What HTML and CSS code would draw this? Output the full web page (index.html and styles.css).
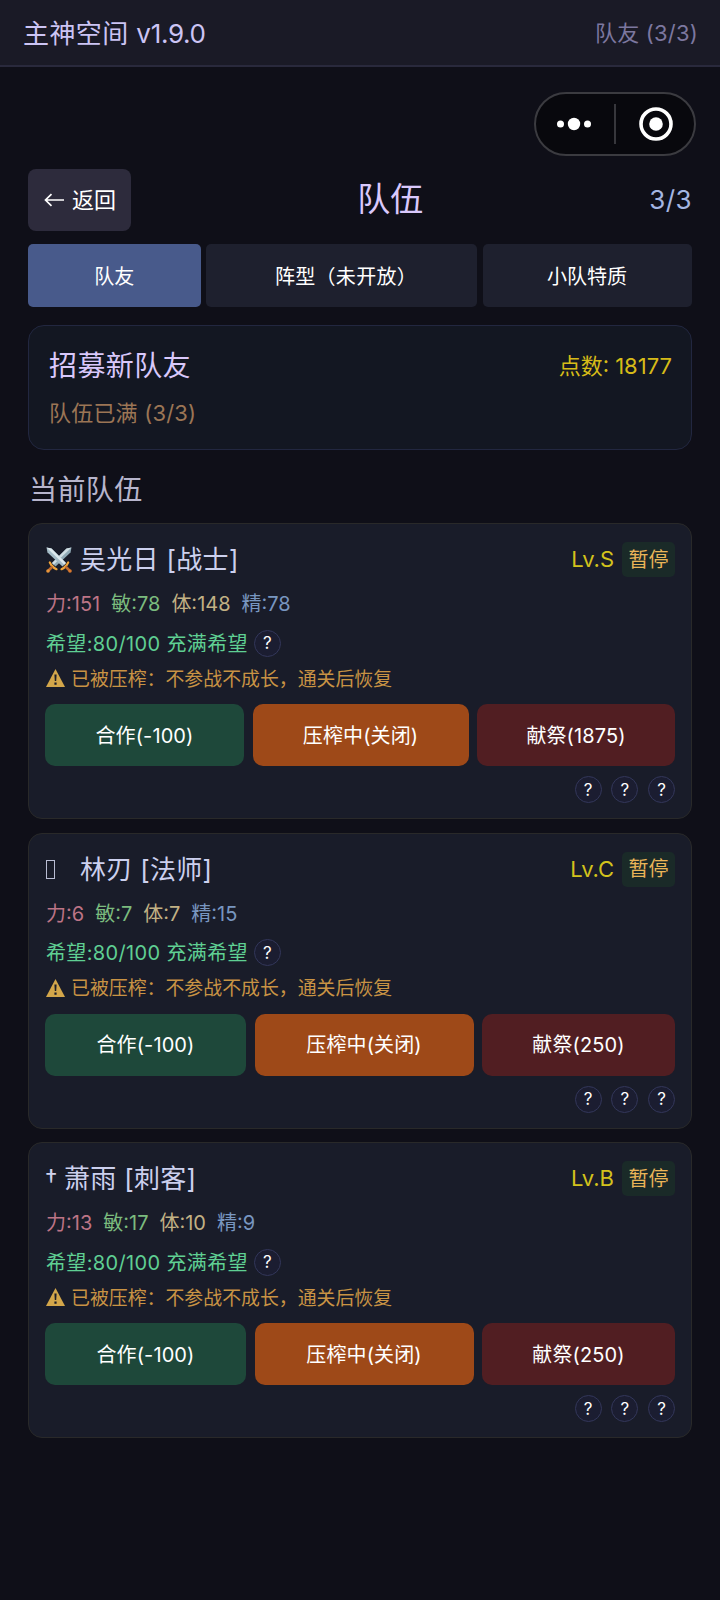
FILE: index.html
```html
<!DOCTYPE html>
<html lang="zh-CN">
<head>
<meta charset="utf-8">
<title>主神空间</title>
<link rel="stylesheet" href="styles.css">
</head>
<body>
<header class="topbar">
  <div class="app-name">主神空间 <span class="version">v1.9.0</span></div>
  <div class="crumb">队友 (3/3)</div>
</header>
<div class="capsule-row">
  <div class="capsule">
    <svg class="dots" width="34" height="14" viewBox="0 0 34 14"><g fill="#fff"><circle cx="3.5" cy="7" r="3.5"/><circle cx="17" cy="7" r="6.2"/><circle cx="30.5" cy="7" r="3.5"/></g></svg>
    <span class="divider"></span>
    <svg class="target" width="34" height="34" viewBox="0 0 34 34"><circle cx="17" cy="17" r="15" fill="none" stroke="#fff" stroke-width="3.6"/><circle cx="17" cy="17" r="6.8" fill="#fff"/></svg>
  </div>
</div>
<main class="page">
  <div class="title-row">
    <button class="back"><svg width="21" height="14" viewBox="0 0 21 14"><path d="M20 7H1.5M7.5 1.2L1.5 7l6 5.8" fill="none" stroke="#fff" stroke-width="1.7"/></svg><span class="back-text">返回</span></button>
    <h1 class="title">队伍</h1>
    <div class="count">3/3</div>
  </div>
  <nav class="tabs">
    <button class="tab active">队友</button>
    <button class="tab formation">阵型（未开放）</button>
    <button class="tab">小队特质</button>
  </nav>
  <section class="recruit">
    <div class="recruit-head"><h2 class="recruit-title">招募新队友</h2><div class="points">点数: 18177</div></div>
    <div class="full">队伍已满 (3/3)</div>
  </section>
  <h2 class="section-title">当前队伍</h2>

  <article class="card">
    <div class="card-head">
      <svg class="swords" width="26" height="26" viewBox="0 0 26 26">
        <path d="M25.500.5l-5 1L6 16l3.500 3.500L24.500 5.500z" fill="#8fa9b5"/><path d="M25.500.5L7.700 17.800 6 16 20.500 1.500z" fill="#cfdde3"/>
        <path d="M.5.500l5 1L20 16l-3.500 3.500L1.500 5.500z" fill="#a4bbc6"/><path d="M.5.500L18.300 17.800 20 16 5.500 1.500z" fill="#dce8ed"/>
        <path d="M3.800 15.500l1.500 2.500 3 3 2.200 1.200M22.200 15.500L20.700 18l-3 3-2.200 1.200" fill="none" stroke="#f2a63a" stroke-width="2.200" stroke-linecap="round"/>
        <path d="M6.500 19.500l-4 4M19.500 19.500l4 4" stroke="#bd6a30" stroke-width="2.600"/>
        <circle cx="2" cy="24" r="1.800" fill="#e9953a"/><circle cx="24" cy="24" r="1.800" fill="#d9782e"/>
      </svg>
      <h3 class="name">吴光日 [战士]</h3><span class="level">Lv.S</span><button class="pause">暂停</button>
    </div>
    <div class="stats"><span class="str">力:151</span><span class="agi">敏:78</span><span class="con">体:148</span><span class="spi">精:78</span></div>
    <div class="hope"><span class="hope-text">希望:80/100 充满希望</span><span class="help">?</span></div>
    <div class="warn"><svg width="19" height="18" viewBox="0 0 19 18"><path d="M9.500 0L19 18H0z" fill="#d3a64a"/><path d="M8.400 5.500h2.200l-.4 6.500H8.800zM8.400 13.500h2.200v2.200H8.400z" fill="#1a1c28"/></svg><span>已被压榨：不参战不成长，通关后恢复</span></div>
    <div class="actions wide"><button class="btn green">合作(-100)</button><button class="btn orange">压榨中(关闭)</button><button class="btn red">献祭(1875)</button></div>
    <div class="helps"><span class="help">?</span><span class="help">?</span><span class="help">?</span></div>
  </article>

  <article class="card">
    <div class="card-head">
      <span class="missing"></span>
      <h3 class="name">林刃 [法师]</h3><span class="level">Lv.C</span><button class="pause">暂停</button>
    </div>
    <div class="stats"><span class="str">力:6</span><span class="agi">敏:7</span><span class="con">体:7</span><span class="spi">精:15</span></div>
    <div class="hope"><span class="hope-text">希望:80/100 充满希望</span><span class="help">?</span></div>
    <div class="warn"><svg width="19" height="18" viewBox="0 0 19 18"><path d="M9.500 0L19 18H0z" fill="#d3a64a"/><path d="M8.400 5.500h2.200l-.4 6.500H8.800zM8.400 13.500h2.200v2.200H8.400z" fill="#1a1c28"/></svg><span>已被压榨：不参战不成长，通关后恢复</span></div>
    <div class="actions"><button class="btn green">合作(-100)</button><button class="btn orange">压榨中(关闭)</button><button class="btn red">献祭(250)</button></div>
    <div class="helps"><span class="help">?</span><span class="help">?</span><span class="help">?</span></div>
  </article>

  <article class="card">
    <div class="card-head">
      <span class="dagger">†</span>
      <h3 class="name">萧雨 [刺客]</h3><span class="level">Lv.B</span><button class="pause">暂停</button>
    </div>
    <div class="stats"><span class="str">力:13</span><span class="agi">敏:17</span><span class="con">体:10</span><span class="spi">精:9</span></div>
    <div class="hope"><span class="hope-text">希望:80/100 充满希望</span><span class="help">?</span></div>
    <div class="warn"><svg width="19" height="18" viewBox="0 0 19 18"><path d="M9.500 0L19 18H0z" fill="#d3a64a"/><path d="M8.400 5.500h2.200l-.4 6.500H8.800zM8.400 13.500h2.200v2.200H8.400z" fill="#1a1c28"/></svg><span>已被压榨：不参战不成长，通关后恢复</span></div>
    <div class="actions"><button class="btn green">合作(-100)</button><button class="btn orange">压榨中(关闭)</button><button class="btn red">献祭(250)</button></div>
    <div class="helps"><span class="help">?</span><span class="help">?</span><span class="help">?</span></div>
  </article>
</main>
</body>
</html>
```
FILE: styles.css
```css
* { box-sizing: border-box; margin: 0; padding: 0; }
body {
  width: 720px;
  min-height: 1600px;
  background: #0f0f18;
  color: #fff;
  font-family: Inter, "Noto Sans CJK SC", sans-serif;
  font-weight: 390;
  white-space: nowrap;
}
button { border: 0; font: inherit; color: #fff; }
h1, h2, h3 { font-weight: 390; }
svg { display: block; flex: none; }

.topbar {
  display: flex;
  justify-content: space-between;
  align-items: center;
  height: 67px;
  padding: 0 22px 2px 23px;
  background: #1a1a26;
  border-bottom: 2px solid #29293c;
}
.app-name { font-size: 26px; letter-spacing: 0.4px; color: #ccc4f4; }
.version { letter-spacing: -0.3px; }
.crumb { padding-bottom: 2px; font-size: 22px; letter-spacing: 0.2px; color: #7c779f; }

.capsule-row { display: flex; justify-content: flex-end; padding: 25px 24px 0 0; }
.capsule {
  display: flex;
  align-items: center;
  width: 162px;
  height: 64px;
  padding-left: 21px;
  border: 2px solid #3b3b40;
  border-radius: 32px;
  background: #08080d;
}
.divider { width: 2px; height: 40px; margin: 0 23px; background: #37373c; }

.page { padding: 12px 28px 0; }
.title-row { display: flex; justify-content: space-between; align-items: center; height: 63px; }
.back {
  display: flex;
  align-items: center;
  gap: 7px;
  width: 103px;
  height: 62px;
  padding-left: 16px;
  border-radius: 8px;
  background: #2d2b3c;
  font-size: 22px;
}
.back-text { padding-bottom: 4px; }
.title { padding-bottom: 5px; font-size: 33px; color: #d9c8fb; }
.count { font-size: 26px; letter-spacing: 0.4px; color: #a4b6e2; }

.tabs { display: grid; grid-template-columns: 172.5px 271px 209px; gap: 5.5px; margin-top: 13px; }
.tab { height: 63px; padding-bottom: 1px; border-radius: 5px; background: #1e202e; font-size: 20px; }
.tab.active { background: #485a8b; }
.tab.formation { padding-left: 9px; letter-spacing: 0.300px; }

.recruit {
  height: 125px;
  margin-top: 18px;
  padding: 16px 19px 0 20px;
  border: 1px solid #222740;
  border-radius: 16px;
  background: #131722;
}
.recruit-head { display: flex; justify-content: space-between; align-items: center; height: 44px; }
.recruit-title { font-size: 28px; letter-spacing: 0.4px; color: #d9c8fb; }
.points { font-size: 22px; color: #d6bb18; }
.full { height: 32px; margin-top: 11px; font-size: 22px; line-height: 32px; letter-spacing: 0.2px; color: #9b7555; }

.section-title { height: 44px; margin: 18px 0 11px 1px; font-size: 28px; line-height: 44px; letter-spacing: 0.4px; color: #b7b5cc; }

.card {
  height: 296px;
  margin-bottom: 13.5px;
  padding: 17px 16px 0;
  border: 1px solid #292929;
  border-radius: 14px;
  background: #191c29;
}
.card-head { display: flex; align-items: center; height: 37px; }
.swords { margin: 0 8px 0 1px; }
.missing { width: 9px; height: 19px; margin: 0 25px 0 1px; border: 1px solid #b9bdd3; }
.dagger { width: 12px; margin-right: 7px; font-size: 25px; line-height: 28px; color: #d0d2ec; }
.name { flex: 1; padding-bottom: 4px; font-size: 26px; letter-spacing: 0.3px; color: #ccd0ee; }
.level { padding-bottom: 1px; font-size: 22px; color: #d3c21c; }
.pause {
  width: 53px;
  height: 35px;
  margin-left: 8px;
  padding-bottom: 3px;
  border-radius: 5px;
  background: #1a2a28;
  font-size: 20px;
  color: #eab558;
}
.stats { display: flex; gap: 11px; height: 30px; margin-top: 11px; font-size: 20px; line-height: 30px; }
.str { padding-left: 1px; color: #bd7486; }
.agi { color: #7bbb7e; }
.con { color: #c2b184; }
.spi { color: #7896c0; }
.hope { display: flex; align-items: center; gap: 6px; height: 28px; margin-top: 10px; font-size: 20px; color: #5fcf93; }
.hope-text { padding: 0 0 2px 1px; letter-spacing: 0.350px; }
.help {
  display: flex;
  justify-content: center;
  align-items: center;
  width: 27px;
  height: 27px;
  border: 1.500px solid #33375a;
  border-radius: 50%;
  background: #1b1d31;
  font-size: 17px;
  color: #fff;
}
.warn { display: flex; align-items: center; gap: 6px; height: 28px; margin-top: 7px; padding-left: 1px; font-size: 18.900px; color: #c89344; }
.warn span { padding-bottom: 2px; }
.actions { display: grid; grid-template-columns: 201px 219px 193px; justify-content: space-between; margin-top: 12px; }
.actions.wide { grid-template-columns: 199px 216px 198px; }
.btn { height: 62px; padding-bottom: 2px; border-radius: 10px; font-size: 20px; letter-spacing: 0.1px; }
.green { background: #1e483a; }
.orange { background: #9e4918; }
.red { background: #511e22; }
.helps { display: flex; justify-content: flex-end; gap: 9.700px; margin-top: 10px; }
```
